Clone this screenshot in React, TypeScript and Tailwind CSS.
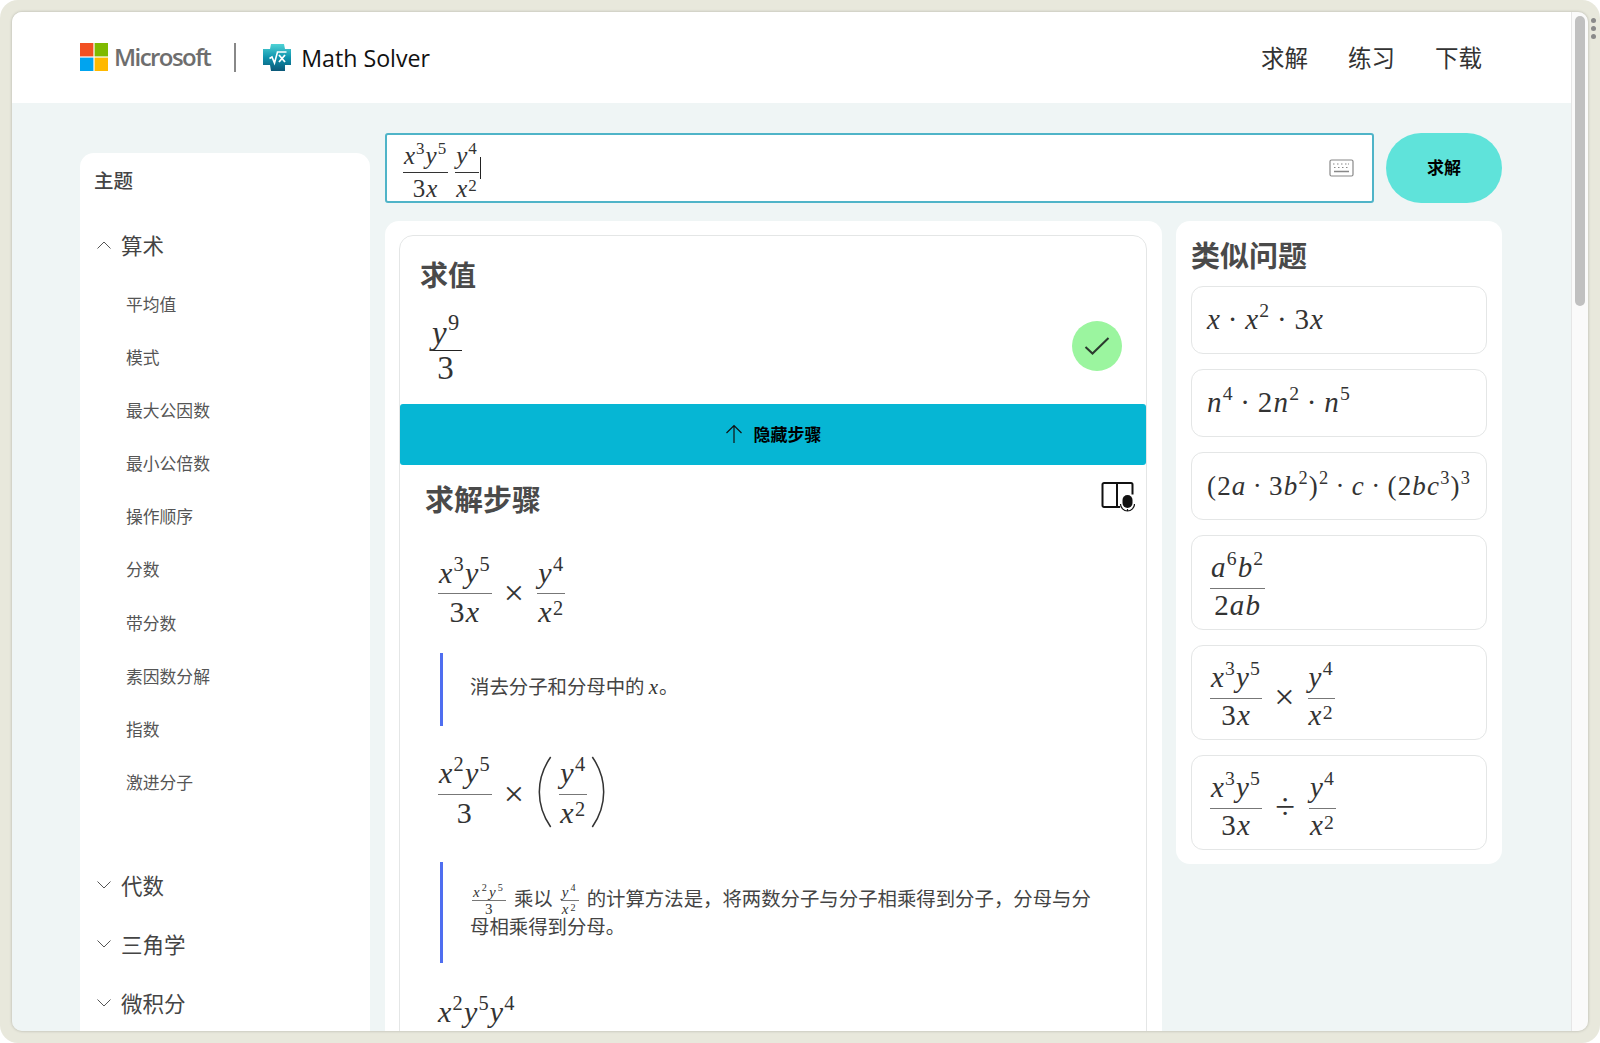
import type { ReactNode } from 'react';

const mathFont = "font-['Liberation_Serif',serif] tracking-[0.04em] text-[#333]";
const topics = ['平均值', '模式', '最大公因数', '最小公倍数', '操作顺序', '分数', '带分数', '素因数分解', '指数', '激进分子'];

const Sup = ({ children, low }: { children: ReactNode; low?: boolean }) => (
  <sup className={`text-[0.68em] not-italic ${low ? 'top-[-0.35em]' : 'top-[-0.6em]'}`}>{children}</sup>
);

const Dot = () => <span className="mx-[0.23em]">·</span>;

const Frac = ({ top, bottom, rule = 'border-[#777]', tight }: { top: ReactNode; bottom: ReactNode; rule?: string; tight?: boolean }) => (
  <span className="inline-flex flex-col items-center leading-none">
    <span className={`w-full whitespace-nowrap border-b px-[1px] text-center ${tight ? 'pb-0 pt-[0.1em]' : 'pb-[0.18em] pt-[0.3em]'} ${rule}`}>{top}</span>
    <span className={`whitespace-nowrap text-center ${tight ? 'pt-[0.05em]' : 'pt-[0.1em]'}`}>{bottom}</span>
  </span>
);

const X3Y5 = () => (
  <>
    <i>x</i>
    <Sup>3</Sup>
    <i>y</i>
    <Sup>5</Sup>
  </>
);

const X2Y5 = () => (
  <>
    <i>x</i>
    <Sup>2</Sup>
    <i>y</i>
    <Sup>5</Sup>
  </>
);

const Y4 = () => (
  <>
    <i>y</i>
    <Sup>4</Sup>
  </>
);

const X2 = () => (
  <>
    <i>x</i>
    <Sup low>2</Sup>
  </>
);

const Chevron = ({ up }: { up?: boolean }) => (
  <svg width="16" height="10" viewBox="0 0 16 10" fill="none" stroke="#555" strokeWidth="1">
    <path d={up ? 'M1.5 8.5 8 2l6.5 6.5' : 'M1.5 1.5 8 8l6.5-6.5'} />
  </svg>
);

const MsLogo = () => (
  <svg width="28" height="28" viewBox="0 0 28 28">
    <rect width="13.4" height="13.4" fill="#f25022" />
    <rect x="14.6" width="13.4" height="13.4" fill="#7fba00" />
    <rect y="14.6" width="13.4" height="13.4" fill="#00a4ef" />
    <rect x="14.6" y="14.6" width="13.4" height="13.4" fill="#ffb900" />
  </svg>
);

const SolverLogo = () => (
  <svg width="29" height="29" viewBox="0 0 29 29">
    <defs>
      <linearGradient id="solver" x1="0" y1="0" x2="0" y2="1">
        <stop offset="0" stopColor="#4fd3d6" />
        <stop offset="0.5" stopColor="#0f93ad" />
        <stop offset="1" stopColor="#0b5878" />
      </linearGradient>
    </defs>
    <path d="M8 1h13l1 5h6v16h-6v6H8l-1-6H0V6h7z" fill="url(#solver)" />
    <path d="M6.500 15.500 9 14l2.500 6 3-11h9" fill="none" stroke="#fff" strokeWidth="1.600" />
    <path d="m16 12 6 7m0-7-6 7" fill="none" stroke="#fff" strokeWidth="1.800" />
  </svg>
);

const Keyboard = () => (
  <svg width="25" height="18" viewBox="0 0 25 18" fill="none" stroke="#888">
    <rect x="1" y="1" width="23" height="16" rx="1.500" strokeWidth="1.200" />
    <path d="M4 5h2m2 0h2m2 0h2m2 0h2m1 0h1M5 8.500h2m2 0h2m2 0h2m2 0h2" strokeWidth="1.200" strokeDasharray="1.500 1.500" />
    <path d="M5 12.500h15" strokeWidth="1.400" />
  </svg>
);

const BookMic = () => (
  <svg width="34" height="30" viewBox="0 0 34 30" fill="none" stroke="#111">
    <path d="M16 1H3a1.500 1.500 0 0 0-1.500 1.500v21A1.500 1.500 0 0 0 3 25h13zm0 0h14a1.500 1.500 0 0 1 1.500 1.500v10M16 25h3" strokeWidth="2" />
    <rect x="21.500" y="13" width="10" height="13" rx="5" fill="#111" stroke="none" />
    <path d="M19.500 22a7 7 0 0 0 14 0M26.500 29.500V27" strokeWidth="1.200" />
  </svg>
);

const Paren = ({ flip }: { flip?: boolean }) => (
  <svg width="16" height="72" viewBox="0 0 16 76" fill="none" stroke="#333" strokeWidth="1.600" className={`mt-[6px] ${flip ? '-scale-x-100' : ''}`}>
    <path d="M14 1C5 14 2 26 2 38s3 24 12 37" />
  </svg>
);

const Card = ({ h, children }: { h: string; children: ReactNode }) => (
  <div className={`flex items-center rounded-[12px] border border-[#e4e6e6] bg-white px-[15px] text-[29px] ${mathFont} ${h}`}>
    {children}
  </div>
);

const Times = () => <span className="mx-[12px] pt-[10px] text-[36px] leading-none">×</span>;

export default function App() {
  return (
    <div className="relative h-screen w-screen overflow-hidden rounded-[18px] bg-[#e8e8dc] p-[12px] font-['Noto_Sans_CJK_SC',sans-serif]">
      <div className="flex h-full overflow-hidden rounded-[10px] shadow-[0_0_3px_rgba(0,0,0,0.25)]">
        <div className="flex min-w-0 flex-1 flex-col bg-[#eff5f5]">
          <header className="flex h-[91px] shrink-0 items-center justify-between bg-white pl-[68px] pr-[89px]">
            <div className="flex items-center">
              <MsLogo />
              <span className="ml-[6px] font-['Open_Sans',sans-serif] text-[24px] font-semibold tracking-[-0.065em] text-[#6e6e6e]">Microsoft</span>
              <div className="ml-[24px] h-[29px] w-[2px] bg-[#888]" />
              <div className="ml-[27px]">
                <SolverLogo />
              </div>
              <span className="ml-[9px] pt-[2px] font-['Open_Sans',sans-serif] text-[23.200px] text-[#111]">Math Solver</span>
            </div>
            <nav className="flex gap-[40px] text-[23.500px] text-[#333]">
              <span>求解</span>
              <span>练习</span>
              <span>下载</span>
            </nav>
          </header>

          <div className="flex min-h-0 flex-1 gap-[15px] overflow-hidden pl-[68px]">
            <aside className="mt-[50px] w-[290px] shrink-0 rounded-t-[14px] bg-white px-[15px] text-[#444]">
              <h2 className="-ml-[1px] mt-[13px] text-[19.500px] font-medium leading-[28px]">主题</h2>
              <div className="mt-[37px] flex h-[28px] items-center gap-[9px] pl-[1px] text-[21.500px]">
                <Chevron up />
                <span>算术</span>
              </div>
              <ul className="mt-[32.500px] flex flex-col gap-[29.200px] pl-[31px] text-[16.800px] leading-[24px] text-[#555]">
                {topics.map((t) => (
                  <li key={t}>{t}</li>
                ))}
              </ul>
              <div className="mt-[76.500px] flex flex-col gap-[31px] pl-[1px] text-[21.500px]">
                {['代数', '三角学', '微积分'].map((t) => (
                  <div key={t} className="flex h-[28px] items-center gap-[9px]">
                    <Chevron />
                    <span>{t}</span>
                  </div>
                ))}
              </div>
            </aside>

            <div className="w-[1117px] shrink-0 pt-[30px]">
              <div className="flex h-[70px] gap-[12px]">
                <div className="flex flex-1 items-center justify-between rounded-[3px] border-2 border-[#4fb4c8] bg-white pl-[16px] pr-[18px]">
                  <div className={`flex items-center text-[25px] ${mathFont}`}>
                    <Frac top={<X3Y5 />} bottom={<>3<i>x</i></>} rule="border-[#333]" />
                    <span className="w-[7px]" />
                    <Frac top={<Y4 />} bottom={<X2 />} rule="border-[#333]" />
                    <span className="ml-[1px] h-[22px] w-[1px] bg-[#222]" />
                  </div>
                  <Keyboard />
                </div>
                <button className="w-[116px] rounded-full bg-[#5fe3da] pb-[2px] text-[17px] font-bold text-black">求解</button>
              </div>

              <div className="mt-[18px] flex items-start gap-[14px]">
                <main className="h-[900px] w-[777px] shrink-0 rounded-t-[14px] bg-white py-[14px] pl-[14px] pr-[15px]">
                  <div className="h-full rounded-t-[14px] border border-[#e4e6e6]">
                    <h2 className="ml-[20px] mt-[18px] text-[28px] font-semibold leading-[40px] text-[#4a4a4a]">求值</h2>
                    <div className="flex h-[110px] items-center justify-between pb-[6px] pl-[31px] pr-[24px]">
                      <div className={`mt-[2px] text-[33px] ${mathFont}`}>
                        <Frac tight top={<><i>y</i><Sup>9</Sup></>} bottom="3" rule="border-[#222]" />
                      </div>
                      <div className="flex h-[50px] w-[50px] items-center justify-center rounded-full bg-[#9bf59f]">
                        <svg width="26" height="20" viewBox="0 0 26 20" fill="none" stroke="#2b3a2e" strokeWidth="2">
                          <path d="m1.500 11 7 6.500L24.500 2" />
                        </svg>
                      </div>
                    </div>
                    <div className="flex h-[61px] items-center justify-center gap-[11px] rounded-[3px] bg-[#06b6d4] pb-[2px] text-[17px] font-bold text-black">
                      <svg width="18" height="20" viewBox="0 0 18 20" fill="none" stroke="#111" strokeWidth="1.200">
                        <path d="M9 19V1.500M1.500 9 9 1.500 16.500 9" />
                      </svg>
                      <span>隐藏步骤</span>
                    </div>
                    <div className="mt-[13px] flex items-center justify-between pl-[25px] pr-[11px]">
                      <h2 className="text-[29px] font-semibold leading-[40px] text-[#4a4a4a]">求解步骤</h2>
                      <div className="mb-[3px]">
                        <BookMic />
                      </div>
                    </div>
                    <div className={`ml-[38px] mt-[31px] flex items-center text-[30px] ${mathFont}`}>
                      <Frac top={<X3Y5 />} bottom={<>3<i>x</i></>} />
                      <Times />
                      <Frac top={<Y4 />} bottom={<X2 />} />
                    </div>
                    <div className="ml-[40px] mt-[26px] flex h-[73px] items-center border-l-[3px] border-[#4f6ef0] pb-[6px] pl-[27px] text-[19.400px] text-[#444]">
                      <span>消去分子和分母中的 <i className={`${mathFont} text-[21px]`}>x</i>。</span>
                    </div>
                    <div className={`ml-[38px] mt-[23px] flex items-center text-[30px] ${mathFont}`}>
                      <Frac top={<X2Y5 />} bottom="3" />
                      <Times />
                      <Paren />
                      <span className="w-[6px]" />
                      <Frac top={<Y4 />} bottom={<X2 />} />
                      <span className="w-[3px]" />
                      <Paren flip />
                    </div>
                    <div className="ml-[40px] mt-[34px] h-[101px] border-l-[3px] border-[#4f6ef0] pl-[27px] pr-[50px] pt-[22px] text-[19.400px] leading-[28.600px] text-[#444]">
                      <span className={`ml-[2px] mr-[8px] inline-flex h-[20px] items-center align-middle text-[15px] ${mathFont}`}>
                        <Frac tight top={<span className="tracking-[0.14em]"><X2Y5 /></span>} bottom="3" />
                      </span>
                      乘以
                      <span className={`mx-[8px] inline-flex h-[20px] items-center align-middle text-[15px] ${mathFont}`}>
                        <Frac tight top={<span className="tracking-[0.14em]"><Y4 /></span>} bottom={<span className="tracking-[0.14em]"><X2 /></span>} />
                      </span>
                      的计算方法是，将两数分子与分子相乘得到分子，分母与分母相乘得到分母。
                    </div>
                    <div className={`ml-[38px] mt-[29px] text-[30px] leading-[40px] ${mathFont}`}>
                      <X2Y5 />
                      <Y4 />
                    </div>
                  </div>
                </main>

                <section className="w-[326px] shrink-0 rounded-[14px] bg-white px-[15px] pb-[14px] pt-[13px]">
                  <h2 className="mb-[12px] text-[29px] font-semibold leading-[40px] text-[#4a4a4a]">类似问题</h2>
                  <div className="flex flex-col gap-[15px]">
                    <Card h="h-[68px]">
                      <span><i>x</i><Dot /><i>x</i><Sup>2</Sup><Dot />3<i>x</i></span>
                    </Card>
                    <Card h="h-[68px]">
                      <span><i>n</i><Sup>4</Sup><Dot />2<i>n</i><Sup>2</Sup><Dot /><i>n</i><Sup>5</Sup></span>
                    </Card>
                    <Card h="h-[68px]">
                      <span className="whitespace-nowrap text-[27px]">(2<i>a</i><Dot />3<i>b</i><Sup>2</Sup>)<Sup>2</Sup><Dot /><i>c</i><Dot />(2<i>bc</i><Sup>3</Sup>)<Sup>3</Sup></span>
                    </Card>
                    <Card h="h-[95px]">
                      <span className="ml-[3px]">
                        <Frac top={<><i>a</i><Sup>6</Sup><i>b</i><Sup>2</Sup></>} bottom={<>2<i>ab</i></>} />
                      </span>
                    </Card>
                    <Card h="h-[95px]">
                      <span className="ml-[3px] flex items-center">
                        <Frac top={<X3Y5 />} bottom={<>3<i>x</i></>} />
                        <Times />
                        <Frac top={<Y4 />} bottom={<X2 />} />
                      </span>
                    </Card>
                    <Card h="h-[95px]">
                      <span className="ml-[3px] flex items-center">
                        <Frac top={<X3Y5 />} bottom={<>3<i>x</i></>} />
                        <span className="mx-[13px] pt-[10px] text-[36px] leading-none">÷</span>
                        <Frac top={<Y4 />} bottom={<X2 />} />
                      </span>
                    </Card>
                  </div>
                </section>
              </div>
            </div>
          </div>
        </div>

        <div className="w-[17px] shrink-0 border-l border-[#e6e6e6] bg-[#fafafa] px-[3px] pt-[4px]">
          <div className="h-[290px] rounded-full bg-[#c0c0c0]" />
        </div>
      </div>

      <div className="absolute right-[4px] top-[18px] flex flex-col gap-[3px]">
        <span className="h-[5px] w-[5px] rounded-full bg-[#8a8a8a]" />
        <span className="h-[5px] w-[5px] rounded-full bg-[#8a8a8a]" />
        <span className="h-[5px] w-[5px] rounded-full bg-[#8a8a8a]" />
      </div>
    </div>
  );
}
